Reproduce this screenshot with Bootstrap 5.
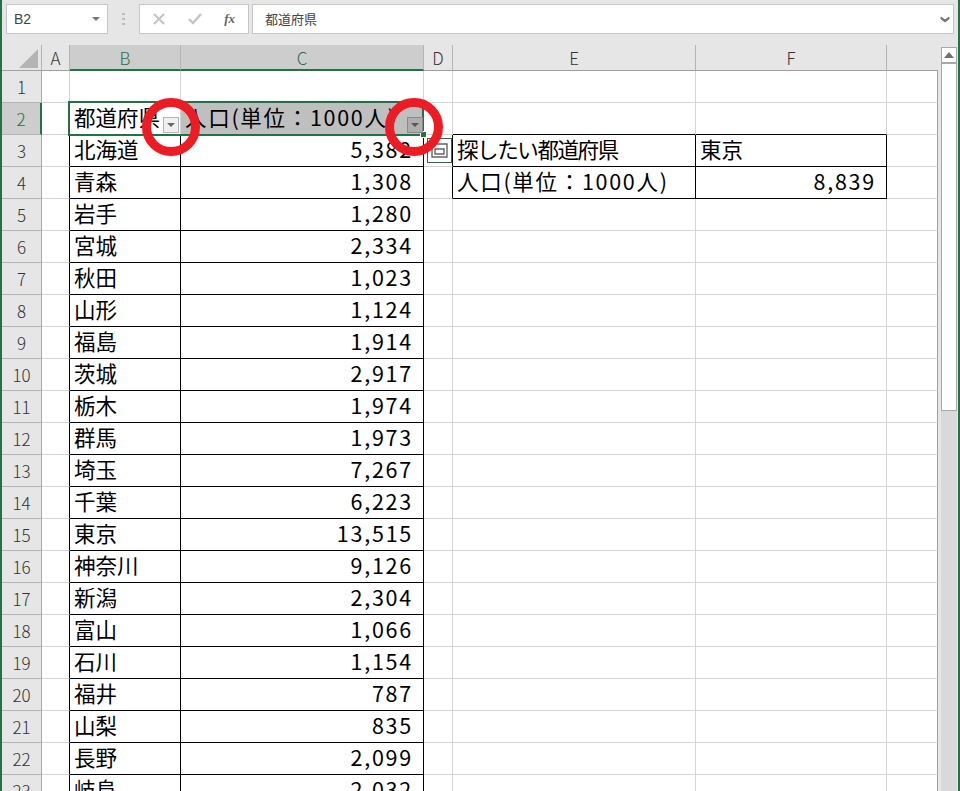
<!DOCTYPE html>
<html lang="ja"><head><meta charset="utf-8"><title>Excel</title>
<link href="https://cdn.jsdelivr.net/npm/bootstrap@5.3.0/dist/css/bootstrap.min.css" rel="stylesheet">
<style>
html,body{height:791px;overflow:hidden}
body{background:#e6e6e6;font-family:"Noto Sans CJK JP",sans-serif;color:#000}
.xl-app{height:791px;border-left:2px solid #217346;border-right:2px solid #217346;overflow:hidden}
.xl-bar{height:45px;padding:4px 4px 11px 4px;gap:3px}
.xl-box{background:#fff;border:1px solid #c6c6c6;height:30px}
.xl-name{width:102px;padding:0 6px 0 7px;font:14px "Liberation Sans",sans-serif;color:#444}
.xl-dots{width:25px;color:#9a9a9a}
.xl-fnbtns{width:110px;padding:0 13px}
.xl-formula{flex:1;padding:0 3px 0 12px;font-size:13px;color:#444}
.fx-label{font:italic bold 13px "Liberation Serif",serif;color:#666}
.xl-main{height:746px}
.xl-sheet-wrap{width:936px;position:relative;overflow:hidden}
.xl-table{border-collapse:separate;border-spacing:0;table-layout:fixed;width:936px;background:#fff}
.xl-table th,.xl-table td{height:32px;padding:0 4px 3px;border-right:1px solid #d4d4d4;border-bottom:1px solid #d4d4d4;font-size:21.5px;font-weight:400;line-height:28px;white-space:nowrap;overflow:hidden}
.xl-table thead th{height:26px;background:#e6e6e6;border-right:1px solid #b4b4b4;border-bottom:1px solid #a0a0a0;font-size:17px;font-weight:300;text-align:center;color:#333;line-height:23px;padding:0}
.xl-table tbody th{background:#e6e6e6;border-right:1px solid #a8a8a8;border-bottom:1px solid #b4b4b4;font-size:17px;font-weight:300;text-align:center;color:#333;padding:0}
.xl-table thead th.hsel{background:#cdcdcd;color:#217346;border-bottom:2px solid #217346}
.xl-table tbody th.rsel{background:#cdcdcd;color:#217346;border-right:2px solid #217346}
.xl-table td.kk{border-right-color:#000;border-bottom-color:#000}
.xl-table td.kr{border-right-color:#000}
.xl-table td.kb{border-bottom-color:#000}
.xl-table td.sheet-end{border-right:1px solid #a0a0a0}
.xl-table thead th.sheet-end{background:#e6e6e6;border-bottom:1px solid #a0a0a0;border-right:0}
.xl-table td.sel-c{background:#bfbfbf}
.num{text-align:right;padding-right:10px!important;letter-spacing:1.75px}
.wide{letter-spacing:1.7px}
.tight{letter-spacing:-1.4px}
.corner{position:absolute;left:17px;top:4px}
.sel-box{position:absolute;left:66px;top:56px;width:356px;height:35px;border:2px solid #217346;pointer-events:none}
.sel-handle{position:absolute;left:418px;top:86px;width:7px;height:7px;background:#217346;border:1px solid #fff}
.flt{position:absolute;top:72px;width:16px;height:16px;background:#f0f0f0;border:1px solid #b0b4bb;display:flex;align-items:center;justify-content:center}
.flt-b{left:161px}
.flt-c{left:405px;background:#aeaeae;border-color:#8a8a8a}
.smart{position:absolute;left:425px;top:93px;width:25px;height:25px;background:#fff;border:1px solid #217346;display:flex;align-items:center;justify-content:center}
.ring{position:absolute;top:53px;width:58px;height:58px;border:9.5px solid #ed1c24;border-radius:50%}
.ring-b{left:139.5px}.ring-c{left:383px}
.xl-scroll{width:20px;padding:2px 1px 0 3px}
.sc-btn{height:15px;background:#fff;border:1px solid #a8a8a8;border-bottom:0;display:flex;align-items:center;justify-content:center}
.sc-thumb{height:349px;background:#fff;border:1px solid #a8a8a8;border-top:2px solid #a8a8a8}
.sc-track{flex:1;background:#d9d9d9}
</style></head><body>
<div class="xl-app d-flex flex-column">
<div class="xl-bar d-flex">
 <div class="xl-box xl-name d-flex align-items-center justify-content-between">B2<svg width="10" height="6"><path d="M1 1h8L5 5z" fill="#777"/></svg></div>
 <div class="xl-dots d-flex align-items-center justify-content-center"><svg width="4" height="14"><path d="M0 1h3v2H0zM0 6h3v2H0zM0 11h3v2H0z" fill="#bbb"/></svg></div>
 <div class="xl-box xl-fnbtns d-flex align-items-center justify-content-between">
  <svg width="12" height="12"><path d="M1 1l10 10M11 1L1 11" stroke="#c4c4c4" stroke-width="2"/></svg>
  <svg width="14" height="12"><path d="M1 6l4 4 8-9" fill="none" stroke="#c4c4c4" stroke-width="2.4"/></svg>
  <span class="fx-label">fx</span>
 </div>
 <div class="xl-box xl-formula d-flex align-items-center justify-content-between">都道府県<svg width="10" height="7"><path d="M1 1l4 3 4-3v2L5 6 1 3z" fill="#777" stroke="#777"/></svg></div>
</div>
<div class="xl-main d-flex">
<div class="xl-sheet-wrap">
<table class="xl-table"><colgroup><col style="width:40px"><col style="width:28px"><col style="width:111px"><col style="width:243px"><col style="width:29px"><col style="width:243px"><col style="width:191px"><col style="width:51px"></colgroup>
<thead><tr><th></th><th>A</th><th class="hsel">B</th><th class="hsel">C</th><th>D</th><th>E</th><th>F</th><th class="sheet-end"></th></tr></thead>
<tbody>
<tr><th>1</th><td></td><td></td><td></td><td></td><td></td><td></td><td class="sheet-end"></td></tr>
<tr><th class="rsel">2</th><td></td><td>都道府県</td><td class="sel-c wide">人口(単位：1000人)</td><td></td><td class="kb"></td><td class="kb"></td><td class="sheet-end"></td></tr>
<tr><th>3</th><td class="kr"></td><td class="kk">北海道</td><td class="kk num">5,382</td><td class="kr"></td><td class="kk tight">探したい都道府県</td><td class="kk">東京</td><td class="sheet-end"></td></tr>
<tr><th>4</th><td class="kr"></td><td class="kk">青森</td><td class="kk num">1,308</td><td class="kr"></td><td class="kk wide">人口(単位：1000人)</td><td class="kk num">8,839</td><td class="sheet-end"></td></tr>
<tr><th>5</th><td class="kr"></td><td class="kk">岩手</td><td class="kk num">1,280</td><td></td><td></td><td></td><td class="sheet-end"></td></tr>
<tr><th>6</th><td class="kr"></td><td class="kk">宮城</td><td class="kk num">2,334</td><td></td><td></td><td></td><td class="sheet-end"></td></tr>
<tr><th>7</th><td class="kr"></td><td class="kk">秋田</td><td class="kk num">1,023</td><td></td><td></td><td></td><td class="sheet-end"></td></tr>
<tr><th>8</th><td class="kr"></td><td class="kk">山形</td><td class="kk num">1,124</td><td></td><td></td><td></td><td class="sheet-end"></td></tr>
<tr><th>9</th><td class="kr"></td><td class="kk">福島</td><td class="kk num">1,914</td><td></td><td></td><td></td><td class="sheet-end"></td></tr>
<tr><th>10</th><td class="kr"></td><td class="kk">茨城</td><td class="kk num">2,917</td><td></td><td></td><td></td><td class="sheet-end"></td></tr>
<tr><th>11</th><td class="kr"></td><td class="kk">栃木</td><td class="kk num">1,974</td><td></td><td></td><td></td><td class="sheet-end"></td></tr>
<tr><th>12</th><td class="kr"></td><td class="kk">群馬</td><td class="kk num">1,973</td><td></td><td></td><td></td><td class="sheet-end"></td></tr>
<tr><th>13</th><td class="kr"></td><td class="kk">埼玉</td><td class="kk num">7,267</td><td></td><td></td><td></td><td class="sheet-end"></td></tr>
<tr><th>14</th><td class="kr"></td><td class="kk">千葉</td><td class="kk num">6,223</td><td></td><td></td><td></td><td class="sheet-end"></td></tr>
<tr><th>15</th><td class="kr"></td><td class="kk">東京</td><td class="kk num">13,515</td><td></td><td></td><td></td><td class="sheet-end"></td></tr>
<tr><th>16</th><td class="kr"></td><td class="kk">神奈川</td><td class="kk num">9,126</td><td></td><td></td><td></td><td class="sheet-end"></td></tr>
<tr><th>17</th><td class="kr"></td><td class="kk">新潟</td><td class="kk num">2,304</td><td></td><td></td><td></td><td class="sheet-end"></td></tr>
<tr><th>18</th><td class="kr"></td><td class="kk">富山</td><td class="kk num">1,066</td><td></td><td></td><td></td><td class="sheet-end"></td></tr>
<tr><th>19</th><td class="kr"></td><td class="kk">石川</td><td class="kk num">1,154</td><td></td><td></td><td></td><td class="sheet-end"></td></tr>
<tr><th>20</th><td class="kr"></td><td class="kk">福井</td><td class="kk num">787</td><td></td><td></td><td></td><td class="sheet-end"></td></tr>
<tr><th>21</th><td class="kr"></td><td class="kk">山梨</td><td class="kk num">835</td><td></td><td></td><td></td><td class="sheet-end"></td></tr>
<tr><th>22</th><td class="kr"></td><td class="kk">長野</td><td class="kk num">2,099</td><td></td><td></td><td></td><td class="sheet-end"></td></tr>
<tr><th>23</th><td class="kr"></td><td class="kk">岐阜</td><td class="kk num">2,032</td><td></td><td></td><td></td><td class="sheet-end"></td></tr>
</tbody></table>
<svg class="corner" width="20" height="20"><path d="M19 0v19H0z" fill="#b4b4b4"/></svg>
<div class="sel-box"></div><div class="sel-handle"></div>
<div class="flt flt-b"><svg width="8" height="5"><path d="M0 0h8L4 4z" fill="#666"/></svg></div>
<div class="flt flt-c"><svg width="8" height="5"><path d="M0 0h8L4 4z" fill="#555"/></svg></div>
<div class="smart"><svg width="19" height="19" viewBox="0 0 19 19"><path d="M2 3h15v13H2z" fill="#fff" stroke="#666" stroke-width="1.4"/><path d="M5 8h9v5H5z" fill="none" stroke="#666" stroke-width="1.4"/></svg></div>
<div class="ring ring-b"></div><div class="ring ring-c"></div>
</div>
<div class="xl-scroll d-flex flex-column">
 <div class="sc-btn"><svg width="10" height="6"><path d="M5 0l5 6H0z" fill="#707070"/></svg></div>
 <div class="sc-thumb"></div>
 <div class="sc-track"></div>
</div>
</div>
</div>
</body></html>
